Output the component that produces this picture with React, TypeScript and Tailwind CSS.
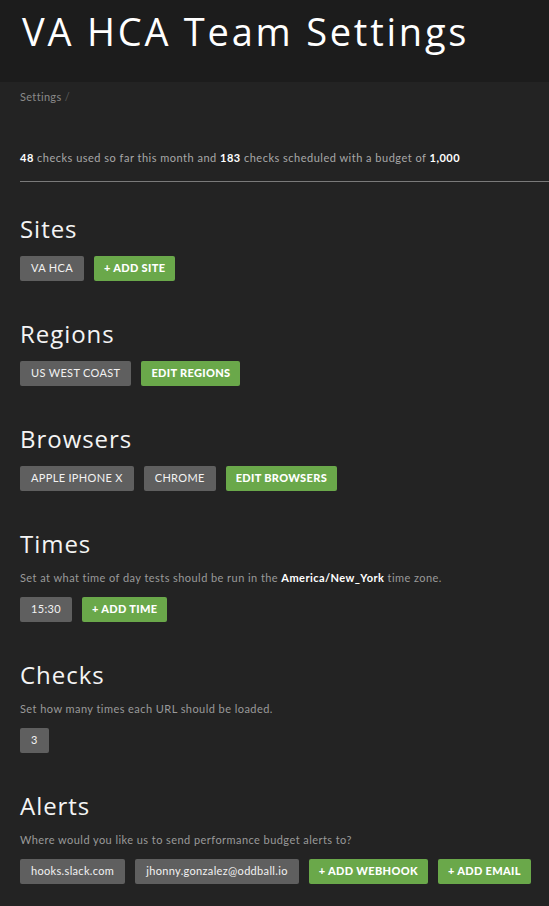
import React from "react";

const font = { fontFamily: "Lato, 'Noto Sans', sans-serif" };
const headFont = { fontFamily: "'Open Sans', 'Noto Sans', sans-serif" };

function Chip({ children }: { children: React.ReactNode }) {
  return (
    <span className="inline-flex h-[25px] items-center rounded-[2px] bg-[#5f5f5f] px-[11px] text-[11px] tracking-[0.03em] text-[#f2f2f2]">
      {children}
    </span>
  );
}

function GreenButton({ children }: { children: React.ReactNode }) {
  return (
    <button className="inline-flex h-[25px] items-center rounded-[2px] bg-[#6aa84a] px-[10px] text-[11px] font-black tracking-[0.03em] text-white">
      {children}
    </button>
  );
}

function Section({
  title,
  description,
  children,
}: {
  title: string;
  description?: React.ReactNode;
  children: React.ReactNode;
}) {
  return (
    <section>
      <h2
        className="text-[24px] leading-[30px] tracking-[0.04em] text-[#f4f4f4]"
        style={headFont}
      >
        {title}
      </h2>
      {description && (
        <p className="mt-[12px] text-[11px] leading-[14px] tracking-[0.04em] text-[#9a9a9a]">
          {description}
        </p>
      )}
      <div className="mt-[12px] flex flex-wrap gap-[10px]">{children}</div>
    </section>
  );
}

export default function App() {
  return (
    <div className="min-h-screen w-full bg-[#232323] pb-10" style={font}>
      <header className="h-[82px] bg-[#1c1c1c] pl-[22px] pt-[7px]">
        <h1
          className="text-[38px] leading-[48px] tracking-[0.073em] text-white"
          style={headFont}
        >
          VA HCA Team Settings
        </h1>
      </header>

      <div className="pl-[20px]">
        <div className="mt-[7px] text-[11px] tracking-[0.03em] text-[#8a8a8a]">
          Settings <span className="text-[#5a5a5a]">/</span>
        </div>

        <p className="mt-[44px] text-[11px] tracking-[0.045em] text-[#a8a8a8]">
          <b className="text-white">48</b> checks used so far this month and{" "}
          <b className="text-white">183</b> checks scheduled with a budget of{" "}
          <b className="text-white">1,000</b>
        </p>
        <hr className="mt-[15px] border-t border-[#7a7a7a]" />

        <div className="mt-[32px] flex flex-col gap-[38px]">
          <Section title="Sites">
            <Chip>VA HCA</Chip>
            <GreenButton>+ ADD SITE</GreenButton>
          </Section>

          <Section title="Regions">
            <Chip>US WEST COAST</Chip>
            <GreenButton>EDIT REGIONS</GreenButton>
          </Section>

          <Section title="Browsers">
            <Chip>APPLE IPHONE X</Chip>
            <Chip>CHROME</Chip>
            <GreenButton>EDIT BROWSERS</GreenButton>
          </Section>

          <Section
            title="Times"
            description={
              <>
                Set at what time of day tests should be run in the{" "}
                <b className="text-white">America/New_York</b> time zone.
              </>
            }
          >
            <Chip>15:30</Chip>
            <GreenButton>+ ADD TIME</GreenButton>
          </Section>

          <Section
            title="Checks"
            description="Set how many times each URL should be loaded."
          >
            <Chip>3</Chip>
          </Section>

          <Section
            title="Alerts"
            description="Where would you like us to send performance budget alerts to?"
          >
            <Chip>hooks.slack.com</Chip>
            <Chip>jhonny.gonzalez@oddball.io</Chip>
            <GreenButton>+ ADD WEBHOOK</GreenButton>
            <GreenButton>+ ADD EMAIL</GreenButton>
          </Section>
        </div>
      </div>
    </div>
  );
}
